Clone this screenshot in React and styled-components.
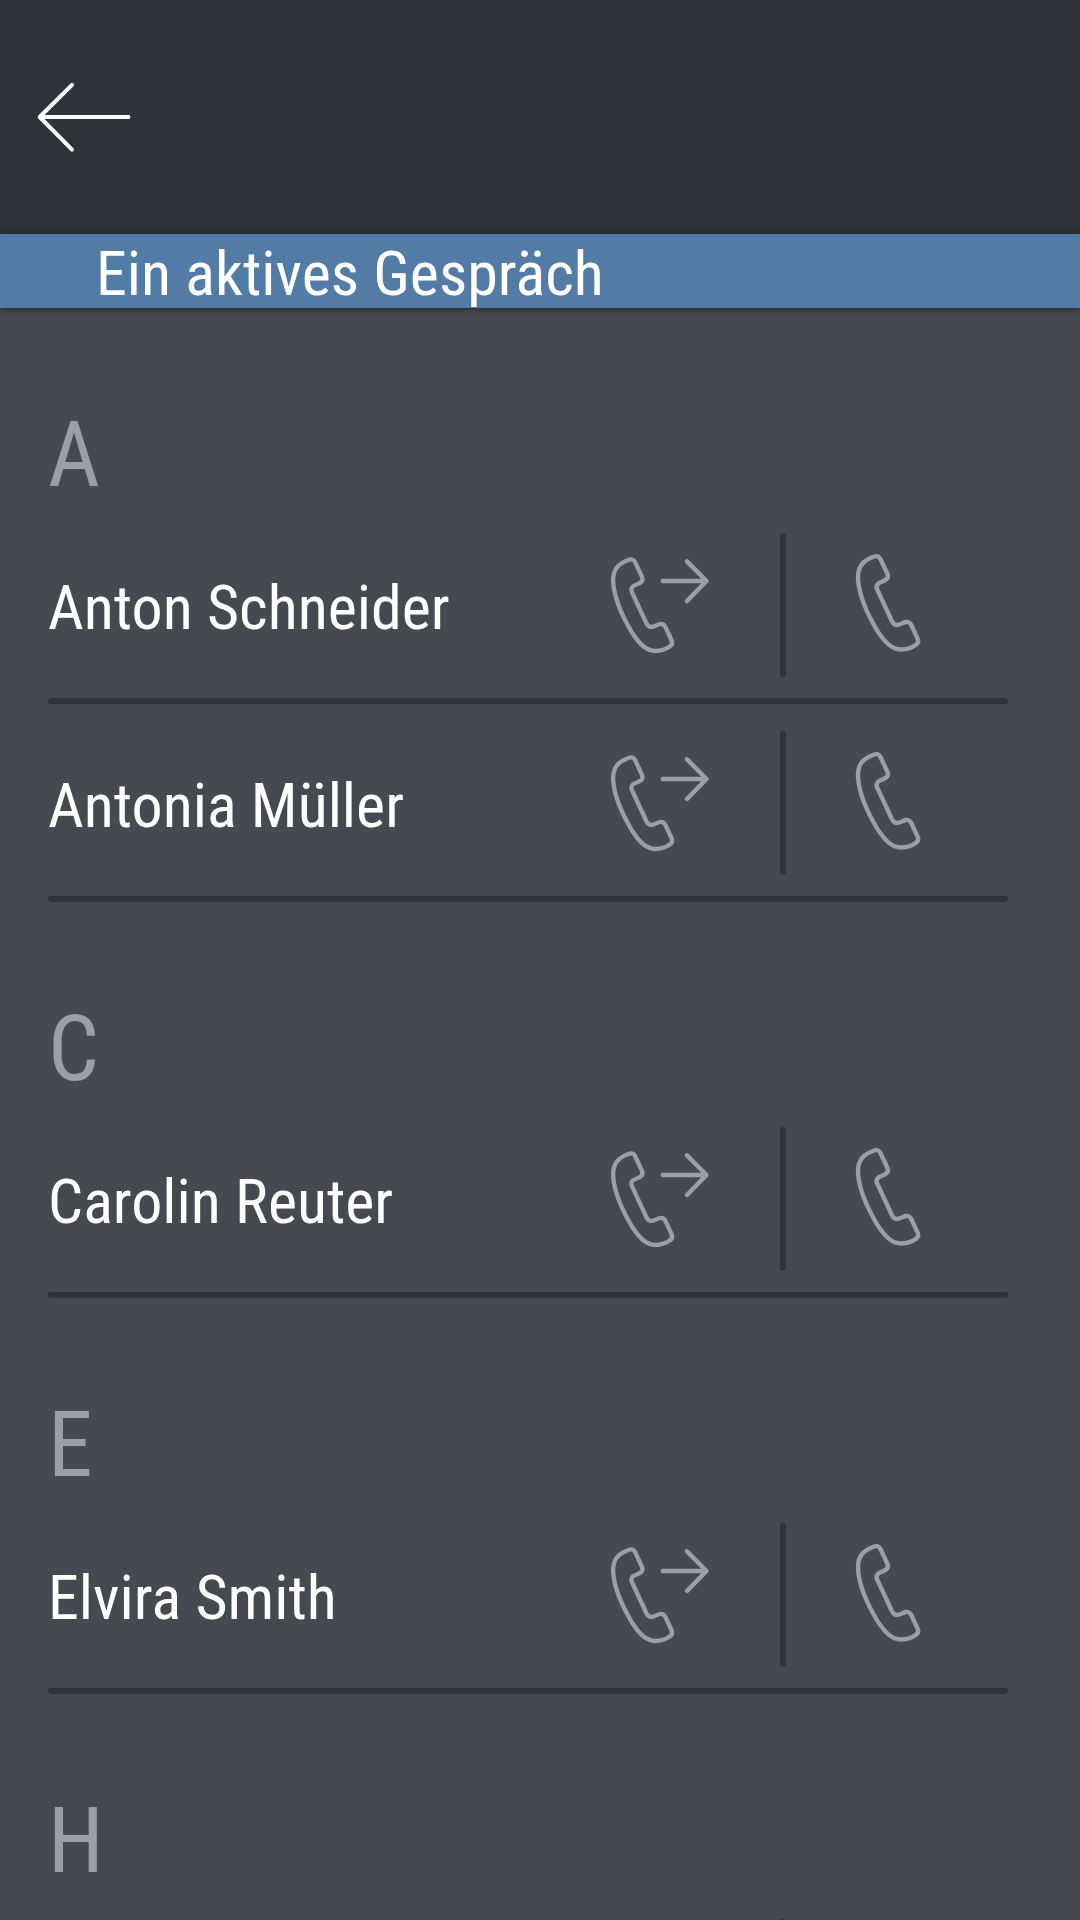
import React from 'react';
import styled, { createGlobalStyle } from 'styled-components';

const GlobalStyle = createGlobalStyle`
  * {
    box-sizing: border-box;
  }

  body {
    margin: 0;
    background-color: #454950;
    color: white;
    font-family: 'Roboto Condensed', Roboto, sans-serif;
    font-weight: 400;
  }
`;

const Page = styled.div`
  display: flex;
  flex-direction: column;
  height: 100vh;
`;

const Header = styled.header`
  display: flex;
  align-items: center;
  flex-shrink: 0;
  padding: 57px 24px;
  background-color: #2e3239;
`;

const IconButton = styled.button`
  display: flex;
  align-items: center;
  justify-content: center;
  padding: 0;
  border: none;
  background: none;
  color: ${({ $light }) => ($light ? 'white' : '#9aa0a9')};
  cursor: pointer;
`;

const Icon = styled.svg`
  width: 120px;
  height: 120px;
  fill: none;
  stroke: currentColor;
  stroke-width: 4;
  stroke-linecap: round;
  stroke-linejoin: round;
`;

const CallBanner = styled.a`
  flex-shrink: 0;
  padding: 6px 96px 0;
  background-color: #527ca5;
  box-shadow: 0 1px 6px rgba(0, 0, 0, 0.5);
  color: white;
  font-size: 62px;
  line-height: 68px;
  text-decoration: none;
  z-index: 1;
`;

const ContactList = styled.main`
  flex: 1;
  min-height: 0;
  padding: 0 72px 0 48px;
  overflow-y: auto;
  scrollbar-width: none;
`;

const Letter = styled.h2`
  margin: 0;
  padding-top: 98px;
  color: #9aa0a9;
  font-size: 90px;
  font-weight: 400;
  line-height: 100px;
`;

const Rows = styled.ul`
  margin: 0;
  padding: 0;
  list-style: none;
`;

const ContactRow = styled.li`
  display: grid;
  grid-template-columns: 1fr 240px 6px 222px;
  height: 192px;
`;

const Name = styled.span`
  align-self: center;
  padding-top: 12px;
  font-size: 62px;
  line-height: 76px;
  white-space: nowrap;
`;

const Separator = styled.span`
  margin: 27px 0 21px;
  border-radius: 3px;
  background-color: #2f333b;
`;

const Divider = styled.li`
  height: 6px;
  border-radius: 3px;
  background-color: #2f333b;
`;

const HANDSET =
  'M19 25.2C21.8 22.8 25.5 21 29 19.8C31.8 18.9 33.8 19.8 35 22L42 36.8C43 39.3 42.5 41.3 40.2 42.8C38 44.3 35.5 44.8 33.2 46.2C31.1 47.8 30.8 49.3 31.8 51.8L46.3 83C47.5 86 49.5 87.3 52.5 86.8C55.3 86.3 57.3 84.5 60 84C62.6 83.6 64.3 84.8 65.5 87.2L71.7 100.5C72.7 103 72 105 69.7 106.6C65.5 109.6 60.5 111 55.5 111C46 110.8 39.5 104 32 92.5C23 77.5 14.5 58 13.2 43C12.6 35.5 14.5 29.2 19 25.2Z';

const BackIcon = () => (
  <Icon viewBox="0 0 120 120" aria-hidden="true">
    <path d="M104.5 60H15.7M48 27.8L15.7 60L48 92.7" />
  </Icon>
);

const TransferIcon = () => (
  <Icon viewBox="0 2 120 120" aria-hidden="true">
    <path d={HANDSET} strokeWidth="4.3" />
    <path d="M62.8 41H106.5M87 21.3L106.5 41L87 61" strokeWidth="4.5" />
  </Icon>
);

const CallIcon = () => (
  <Icon viewBox="-3 2 120 120" aria-hidden="true">
    <path d={HANDSET} strokeWidth="4.3" transform="translate(4.6 -3.7) scale(1.02)" />
  </Icon>
);

const groups = [
  { letter: 'A', names: ['Anton Schneider', 'Antonia Müller'] },
  { letter: 'C', names: ['Carolin Reuter'] },
  { letter: 'E', names: ['Elvira Smith'] },
  { letter: 'H', names: [''] },
];

const Contact = ({ name }) => (
  <>
    <ContactRow>
      <Name>{name}</Name>
      <IconButton type="button" aria-label={`${name} verbinden`}>
        <TransferIcon />
      </IconButton>
      <Separator />
      <IconButton type="button" aria-label={`${name} anrufen`}>
        <CallIcon />
      </IconButton>
    </ContactRow>
    <Divider role="presentation" />
  </>
);

const App = () => {
  return (
    <>
      <GlobalStyle />
      <Page>
        <Header>
          <IconButton type="button" $light aria-label="Zurück">
            <BackIcon />
          </IconButton>
        </Header>
        <CallBanner href="#call">Ein aktives Gespräch</CallBanner>
        <ContactList>
          {groups.map(({ letter, names }) => (
            <section key={letter}>
              <Letter>{letter}</Letter>
              <Rows>
                {names.map((name) => (
                  <Contact key={name} name={name} />
                ))}
              </Rows>
            </section>
          ))}
        </ContactList>
      </Page>
    </>
  );
};

export default App;
